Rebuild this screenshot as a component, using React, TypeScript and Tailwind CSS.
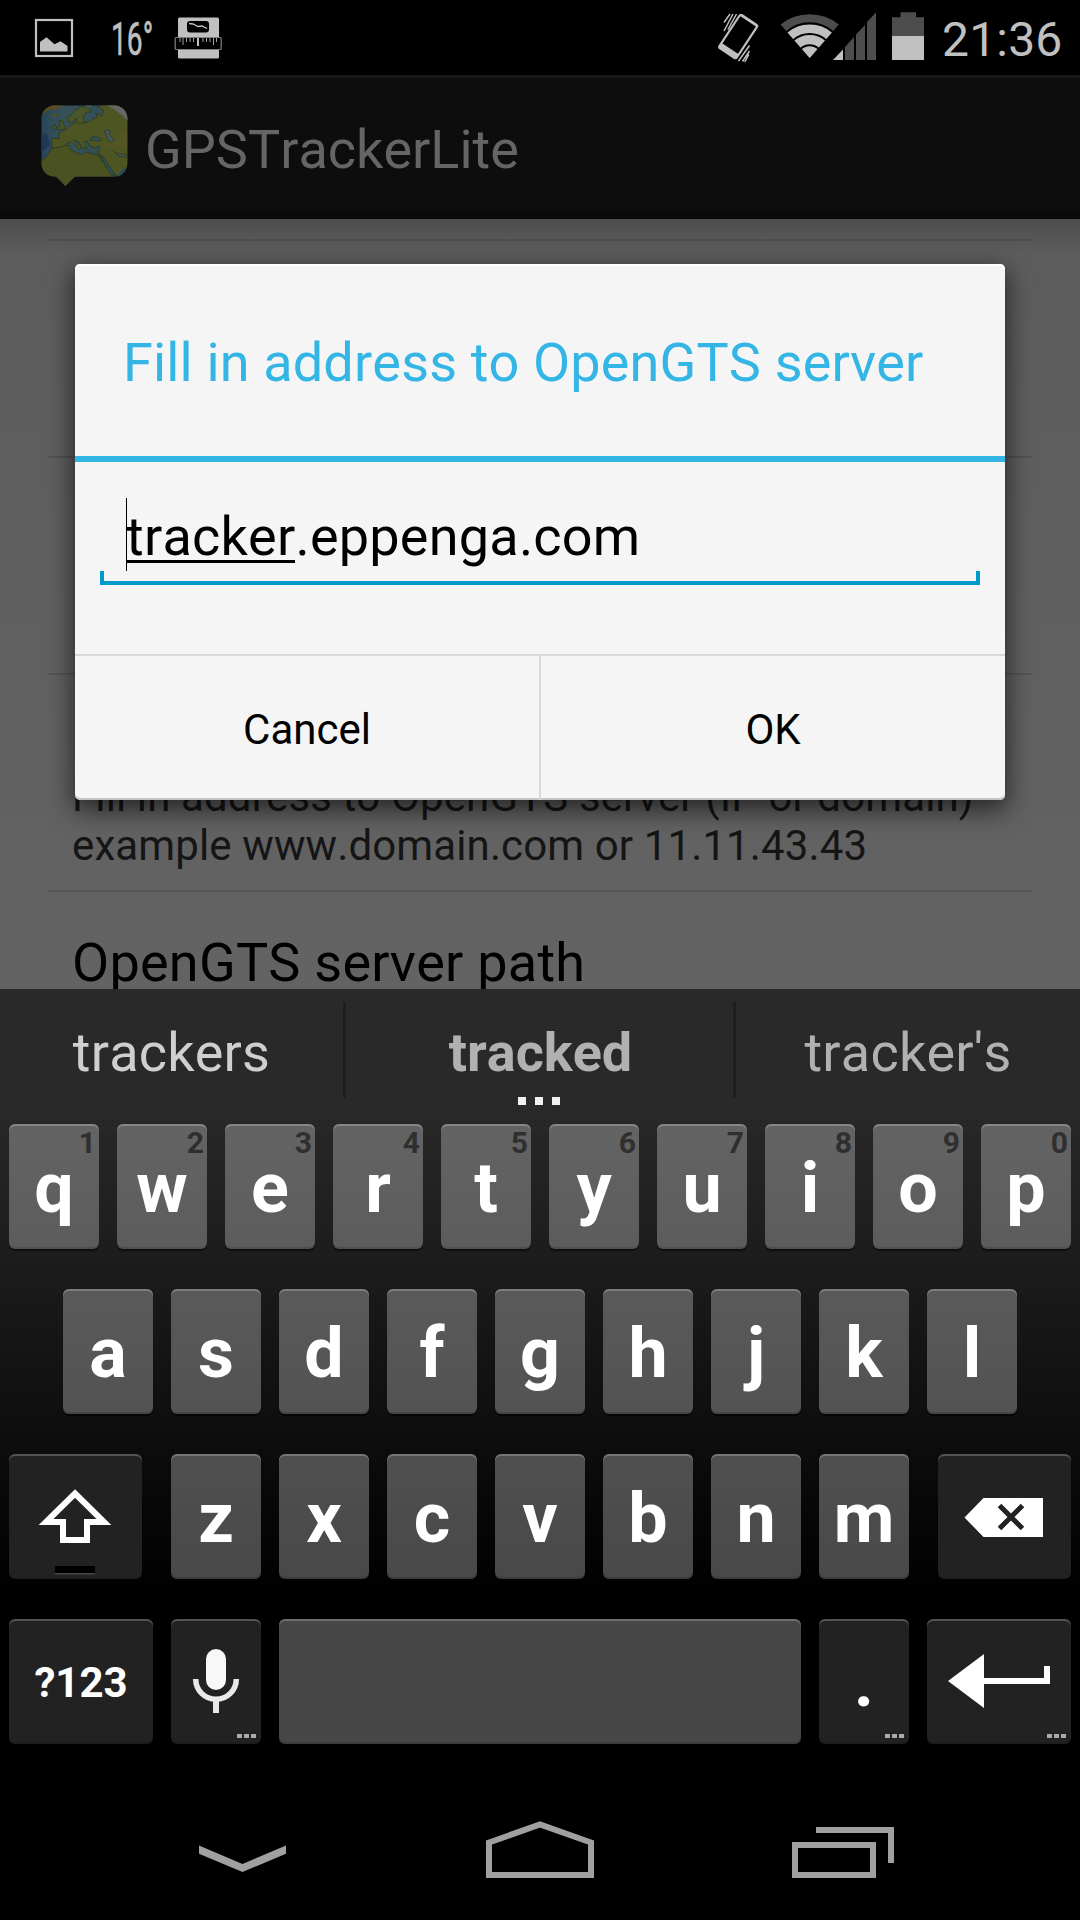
import React from "react";

const FONT = "font-[Roboto,'Noto_Sans',sans-serif] [font-kerning:none]";

function StatusBar() {
  return (
    <div className="flex h-[75px] w-full items-start bg-black text-[#c0c0c0]">
      <svg width="240" height="75" viewBox="0 0 240 75" className="shrink-0">
        <rect x="36" y="20" width="36" height="36" fill="none" stroke="#c0c0c0" strokeWidth="2.2" />
        <path d="M40 51.5V42l6.5-4.700 8 7 6-3 7 4.700v5.500z" fill="#c0c0c0" />
        <text x="0" y="0" transform="translate(111 55) scale(.6 1)" fontSize="47" fill="#c0c0c0" stroke="#c0c0c0" strokeWidth="0.6" fontFamily="Roboto">16°</text>
        <rect x="178" y="17.500" width="41" height="41" rx="1.500" fill="#c0c0c0" />
        <rect x="187" y="21" width="22" height="11.500" rx="3" fill="#000" />
        <path d="M189 23.500l4 .5 5 2.500 4-.5 5 2.500" stroke="#c0c0c0" strokeWidth="1.300" fill="none" />
        <rect x="175.200" y="37.500" width="46" height="12" rx="1" fill="#000" stroke="#808080" strokeWidth="1.200" />
        <path d="M180 38v4M183 38v7M186.500 38v4M190 38v4M193.500 38v4M203 38v4M206.500 38v4M210 38v4M213.500 38v7M216.500 38v4" stroke="#a0a0a0" strokeWidth="1" />
        <path d="M198 38v8" stroke="#c0c0c0" strokeWidth="2" />
      </svg>
      <svg width="230" height="75" viewBox="0 0 230 75" className="ml-[470px] shrink-0">
        <g transform="translate(28.200 36.500) rotate(33.500)">
          <path d="M-11.500 -18a3 3 0 0 1 3 -3h17a3 3 0 0 1 3 3v36a3 3 0 0 1 -3 3h-17a3 3 0 0 1 -3 -3zM-9.300 -18v32.500h18.600v-32.500z" fill="#c0c0c0" fillRule="evenodd" />
        </g>
        <path d="M14 22.500l6-8.500M14 31l9-17M18 29.500l8.500-15.500M28.500 61l11-15.500M32.500 61.500l7-10.500M34.800 62l4-7.500" stroke="#c0c0c0" strokeWidth="1.500" />
        <g transform="translate(-20 0)">
          <path d="M119.700 58L90.600 24.500A46 46 0 0 1 148.800 24.500z" fill="#4d4d4d" />
          <path d="M119.700 58L97.500 32.500A35 35 0 0 1 141.900 32.500z" fill="#c0c0c0" />
          <path d="M96.500 32A35.500 35.500 0 0 1 142.900 32M103.500 40A24.500 24.500 0 0 1 135.900 40M110.500 49A13 13 0 0 1 128.900 49" stroke="#000" strokeWidth="2" fill="none" />
          <path d="M143 60l10-10.500V60z" fill="#c0c0c0" />
          <path d="M155 60V47l9-10V60zM166 60V34.500l9-9.500V60zM177 60V22l9-9.500V60z" fill="#4d4d4d" />
          <path d="M202 36V17.300h8.500V12.300h15.500v5h8V36z" fill="#4d4d4d" />
          <rect x="202" y="36" width="32" height="24" fill="#c0c0c0" />
        </g>
      </svg>
      <div className="ml-auto w-[138px] pt-[12px] text-[48px] leading-[56px] tracking-[0.2px]">21:36</div>
    </div>
  );
}

function AppIcon() {
  return (
    <svg width="88" height="84" viewBox="0 0 88 84" className="shrink-0">
      <defs>
        <clipPath id="bubble">
          <path d="M15 1.500H74A13 13 0 0 1 87.300 15V59A13 13 0 0 1 74 72.500H35L25.300 82L16 72.500H15A13 13 0 0 1 1.500 59V15A13 13 0 0 1 15 1.500z" />
        </clipPath>
        <linearGradient id="sea" x1="0" y1="0" x2="1" y2="0">
          <stop offset="0" stopColor="#27455a" />
          <stop offset="0.25" stopColor="#365257" />
          <stop offset="1" stopColor="#2f4d55" />
        </linearGradient>
      </defs>
      <g clipPath="url(#bubble)">
        <rect width="88" height="84" fill="url(#sea)" />
        <path d="M0 32l7-3 3 12-9 8z" fill="#213654" />
        <path d="M0 0h26l-9 5-8 1-9 6z" fill="#5a4a25" />
        <path d="M11 10.500l4-1 3 1-2 2-4 0z" fill="#4b5228" />
        <g stroke="#2c3a20" strokeWidth="0.8">
          <path d="M28 17.700l-1-4 4-3 5-5 6-3.500 7 2 3 4-6 0-3 6 2 3-3 4-4 1-2-7-4 3z" fill="#49562a" />
          <path d="M17 24l3-2-1-5 3-1 4 9-7 1z" fill="#47562a" />
          <path d="M12.500 23l3-2.500 1 4-3 1.500z" fill="#47562a" />
          <path d="M11.700 34.300l8 0-1-5 8-4.500 5-4.500 4-1 0-5 3 5 9-1 5-3 5-2-2-4 6 3 2-6-6-4 6-2H90V76L74 71 60 51l-2-1 2-8-6 2-5-3-2-4-3 1 3 7-5-1-3-6-4-2-2 0 5 5 3 3-2 2-3-4-5-4-4 1-5 6-7 1-3-1z" fill="#4d5522" />
          <path d="M-2 60l9-8 5-7.500 17-3.500 2 5 11 5 3-3 13 3 17 24H-2z" fill="#495220" />
          <path d="M34.500 83V72H16l9.500 11z" fill="#495220" stroke="none" />
          <path d="M49.500 36l3-3.500 4 1 2-1 3 3.500-5 1z" fill="#30525b" />
          <path d="M64 27l5-1 2 2-2 2 5 6-2 3-4-3z" fill="#42565c" />
          <path d="M73 47l4 2.500 9 1 0 3-8-1.500z" fill="#42565c" />
          <path d="M59.500 51l3 1 13 19-4 0z" fill="#2d4f5b" />
        </g>
        <path d="M56 40l14 3 18 3V28l-6-4-4 10-8 6z" fill="#5c5424" opacity="0.6" />
        <path d="M76 74l5-7 8-6v13z" fill="#28495c" />
        <path d="M64 0h26v20Q80 7 64 0z" fill="#666" />
        <path d="M44 0l4 4 4-2-1-2z" fill="#4a595c" />
      </g>
    </svg>
  );
}

function SettingsList() {
  return (
    <div className="h-[770px] overflow-hidden bg-[linear-gradient(to_bottom,rgba(0,0,0,0.16),transparent_34px),linear-gradient(to_bottom,#5c5c5c,#636363)] px-12">
      <div className="h-5" />
      <div className="h-[217px] border-t-2 border-[#4d4d4d]" />
      <div className="h-[217px] border-t-2 border-[#525252]" />
      <div className="h-[217px] border-t-2 border-[#545454] px-6 pt-[97px] text-[42px] leading-[49px] tracking-[0.12px] text-[#151515]">
        <p className="whitespace-nowrap">Fill in address to OpenGTS server (IP or domain)</p>
        <p className="whitespace-nowrap">example www.domain.com or 11.11.43.43</p>
      </div>
      <div className="h-[217px] border-t-2 border-[#555] px-6 pt-[39px] text-[54px] leading-[64px] tracking-[0.24px] text-black">
        OpenGTS server path
      </div>
    </div>
  );
}

function Dialog() {
  return (
    <div className="absolute left-[75px] top-[264px] flex h-[536px] w-[930px] flex-col rounded-[5px] bg-[#f5f5f5] text-black shadow-[0_8px_24px_2px_rgba(0,0,0,0.6),inset_0_-2px_0_#c4c4c4,inset_0_2px_0_#fff]">
      <div className="h-[192px] px-12 pt-[67px] text-[54px] leading-[64px] tracking-[0.15px] whitespace-nowrap text-[#33b5e5]">
        Fill in address to OpenGTS server
      </div>
      <div className="h-[6px] bg-[#33b5e5]" />
      <div className="h-[192px] px-[25px] pt-[36px]">
        <div className="relative h-[87px] border-b-4 border-[#0099cc] pl-[26px] text-[54px] leading-[78px] tracking-[0.22px]">
          <div className="absolute left-[26px] top-0 h-[73px] w-px bg-black" />
          <div className="absolute bottom-0 left-0 h-[10px] w-1 bg-[#0099cc]" />
          <div className="absolute right-0 bottom-0 h-[10px] w-1 bg-[#0099cc]" />
          <div className="absolute top-[62px] left-[27px] h-[3px] w-[168px] bg-black" />
          tracker.eppenga.com
        </div>
      </div>
      <div className="flex h-[146px] border-t-2 border-[#d8d8d8] text-[42px] leading-[49px]">
        <div className="w-[466px] border-r-2 border-[#d8d8d8] pt-[49px] text-center">Cancel</div>
        <div className="flex-1 pt-[49px] text-center">OK</div>
      </div>
    </div>
  );
}

const EDGE = "shadow-[inset_0_2px_0_rgba(255,255,255,0.22),inset_0_-2px_0_rgba(0,0,0,0.14),0_2px_1px_rgba(0,0,0,0.5)]";
const LIGHT = `relative h-[125px] shrink-0 rounded-[6px] bg-white/28 ${EDGE}`;
const DARK = `relative h-[125px] shrink-0 rounded-[6px] bg-[#222] ${EDGE}`;

function Letter({ c, hint }: { c: string; hint?: string }) {
  return (
    <div className={`${LIGHT} w-[90px] pt-[23px] text-center text-[70px] leading-[82px] font-bold text-white`}>
      {hint && <span className="absolute top-[1px] right-[3px] text-[30px] leading-[35px] text-[#2f2f2f]">{hint}</span>}
      {c}
    </div>
  );
}

function MoreDots() {
  return (
    <div className="absolute right-[5px] bottom-[6px] flex gap-[2px]">
      <i className="h-[4px] w-[5px] bg-[#aaa]" />
      <i className="h-[4px] w-[5px] bg-[#aaa]" />
      <i className="h-[4px] w-[5px] bg-[#aaa]" />
    </div>
  );
}

function Suggestions() {
  return (
    <div className="relative flex h-[135px] pt-[13px] text-center text-[54px] leading-[64px]">
      <div className="h-[96px] w-[343px] pt-[19px] tracking-[0.2px] text-[#cfcfcf]">trackers</div>
      <div className="h-[96px] w-[3px] bg-[#1e1e1e]" />
      <div className="h-[96px] w-[387px] pt-[19px] pl-[2px] font-bold text-[#b1b1b1]">tracked</div>
      <div className="h-[96px] w-[3px] bg-[#1e1e1e]" />
      <div className="h-[96px] w-[344px] pt-[19px] tracking-[0.2px] text-[#b1b1b1]">tracker's</div>
      <div className="absolute top-[108px] left-[518px] flex gap-[9px]">
        <i className="size-[8px] bg-[#f0f0f0]" />
        <i className="size-[8px] bg-[#f0f0f0]" />
        <i className="size-[8px] bg-[#f0f0f0]" />
      </div>
    </div>
  );
}

function Keyboard() {
  return (
    <div className="h-[811px] bg-[linear-gradient(to_bottom,#292929_14%,#000_75%)]">
      <Suggestions />
      <div className="flex flex-col gap-10 px-[9px]">
        <div className="flex gap-[18px]">
          {"qwertyuiop".split("").map((c, i) => (
            <Letter key={c} c={c} hint={String((i + 1) % 10)} />
          ))}
        </div>
        <div className="flex gap-[18px] pl-[54px]">
          {"asdfghjkl".split("").map((c) => (
            <Letter key={c} c={c} />
          ))}
        </div>
        <div className="flex justify-between">
          <div className={`${DARK} w-[133px]`}>
            <svg width="133" height="125" viewBox="0 0 133 125">
              <path d="M66 39.500L95 68H78V86H54V68H37z" fill="none" stroke="#fff" strokeWidth="6" />
              <rect x="46" y="112" width="40" height="8" fill="#000" />
              <rect x="46" y="119" width="40" height="1.500" fill="#444" />
            </svg>
          </div>
          <div className="flex gap-[18px]">
            {"zxcvbnm".split("").map((c) => (
              <Letter key={c} c={c} />
            ))}
          </div>
          <div className={`${DARK} w-[133px]`}>
            <svg width="133" height="125" viewBox="0 0 133 125">
              <path d="M26.500 63.500L45.500 44H105V83H45.500z" fill="#fff" />
              <path d="M61.500 51.500l23 23M84.500 51.500l-23 23" stroke="#222" strokeWidth="5" />
            </svg>
          </div>
        </div>
        <div className="flex gap-[18px]">
          <div className={`${DARK} w-[144px] pt-[39px] text-center text-[42px] leading-[50px] font-bold text-white`}>?123</div>
          <div className={`${DARK} w-[90px]`}>
            <svg width="90" height="125" viewBox="0 0 90 125">
              <rect x="35" y="30" width="20" height="41" rx="10" fill="#f8f8f8" />
              <path d="M24.700 60a20.300 20.300 0 0 0 40.600 0" fill="none" stroke="#eaeaea" strokeWidth="5.500" />
              <rect x="42" y="80" width="6" height="14" fill="#e8e8e8" />
            </svg>
            <MoreDots />
          </div>
          <div className={`${LIGHT} w-[522px]`} />
          <div className={`${DARK} w-[90px] pt-[22px] text-center text-[70px] leading-[82px] font-bold text-white`}>
            .
            <MoreDots />
          </div>
          <div className={`${DARK} w-[144px]`}>
            <svg width="144" height="125" viewBox="0 0 144 125">
              <path d="M21 62L57 35V59H117V47H123V65H57V89z" fill="#fff" />
            </svg>
            <MoreDots />
          </div>
        </div>
      </div>
    </div>
  );
}

function NavBar() {
  return (
    <div className="flex h-[120px] items-start bg-black">
      <svg width="88" height="120" viewBox="0 0 88 120" className="ml-[199px]">
        <path d="M0 45.500L43.500 64 87 45.500V53.700L43.500 72 0 53.700z" fill="#a0a0a0" />
      </svg>
      <svg width="108" height="120" viewBox="0 0 108 120" className="ml-[199px]">
        <path d="M3 75V42.500L54 24.500 105 42.500V75z" fill="none" stroke="#a0a0a0" strokeWidth="6" />
      </svg>
      <svg width="102" height="120" viewBox="0 0 102 120" className="ml-[198px]">
        <path d="M3 45H81V75H3z M24 30H99V63" fill="none" stroke="#a0a0a0" strokeWidth="6" />
      </svg>
    </div>
  );
}

export default function App() {
  return (
    <div className={`relative flex h-[1920px] w-[1080px] flex-col overflow-hidden bg-black ${FONT}`}>
      <StatusBar />
      <div className="flex h-[144px] items-start border-t-[3px] border-b-[6px] border-t-[#171717] border-b-[#090909] bg-[#0d0d0d] pl-10">
        <div className="pt-[26px]">
          <AppIcon />
        </div>
        <div className="ml-[17px] pt-[40px] text-[54px] leading-[64px] text-[#656565]">GPSTrackerLite</div>
      </div>
      <SettingsList />
      <Dialog />
      <Keyboard />
      <NavBar />
    </div>
  );
}
